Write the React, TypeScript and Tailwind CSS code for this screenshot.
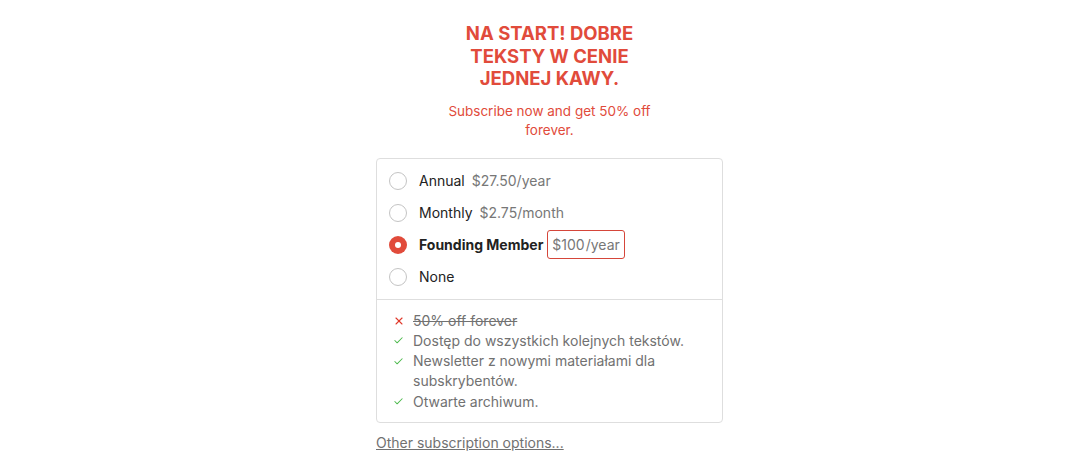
import React, { useState } from 'react';
import { Check, X } from 'lucide-react';

const plans = [
  { id: 'annual', label: 'Annual', price: '$27.50/year' },
  { id: 'monthly', label: 'Monthly', price: '$2.75/month' },
  { id: 'founding', label: 'Founding Member', price: '$100/year' },
  { id: 'none', label: 'None', price: '' },
];

const features = [
  { ok: false, text: '50% off forever' },
  { ok: true, text: 'Dostęp do wszystkich kolejnych tekstów.' },
  { ok: true, text: 'Newsletter z nowymi materiałami dla subskrybentów.' },
  { ok: true, text: 'Otwarte archiwum.' },
];

const App = () => {
  const [selected, setSelected] = useState('founding');

  return (
    <div className="min-h-screen bg-white flex justify-center pl-[12px] font-['Inter','Liberation_Sans',sans-serif]">
      <div className="w-[347px] pt-[22px] flex flex-col items-center">
        <h1 className="max-w-[215px] text-center text-[18.5px] leading-[22.5px] font-bold uppercase text-[#e14b3b]">
          Na start! Dobre teksty w cenie jednej kawy.
        </h1>
        <p className="mt-[12px] max-w-[220px] text-center text-[13.5px] leading-[19px] text-[#e14b3b]">
          Subscribe now and get 50% off forever.
        </p>

        <div className="mt-[18px] w-full border border-[#dedede] rounded-[4px]">
          <div className="py-[6px] px-[12px]">
            {plans.map((p) => {
              const active = selected === p.id;
              return (
                <label
                  key={p.id}
                  className="h-[32px] flex items-center cursor-pointer"
                  onClick={() => setSelected(p.id)}
                >
                  {active ? (
                    <span className="w-[18px] h-[18px] rounded-full bg-[#e14b3b] flex items-center justify-center">
                      <span className="w-[6px] h-[6px] rounded-full bg-white" />
                    </span>
                  ) : (
                    <span className="w-[18px] h-[18px] rounded-full border-[1.5px] border-[#c4c4c4] bg-white" />
                  )}
                  <span
                    className={`ml-[12px] text-[14px] text-[#222] ${active ? 'font-bold' : ''}`}
                  >
                    {p.label}
                  </span>
                  {p.price &&
                    (active ? (
                      <span className="ml-[4px] h-[29px] flex items-center px-[4px] border border-[#d5463a] rounded-[3px] text-[14px] text-[#777]">
                        $100<span className="ml-[1px]">/year</span>
                      </span>
                    ) : (
                      <span className="ml-[7px] text-[14px] text-[#777]">{p.price}</span>
                    ))}
                </label>
              );
            })}
          </div>

          <ul className="border-t border-[#dedede] pt-[11px] pb-[10px] pl-[16px] pr-[12px]">
            {features.map((f, i) => (
              <li key={i} className="flex text-[14px] leading-[20.3px] text-[#717171]">
                <span className="w-[20px] shrink-0 h-[20px] flex items-center">
                  {f.ok ? (
                    <Check size={11} strokeWidth={2.2} className="text-[#4cb94c]" />
                  ) : (
                    <X size={12} strokeWidth={2.2} className="text-[#e0392b]" />
                  )}
                </span>
                <span className={f.ok ? '' : 'line-through'}>{f.text}</span>
              </li>
            ))}
          </ul>
        </div>

        <div className="w-full mt-[7px]">
          <a href="#" className="text-[14px] leading-5 text-[#717171] underline">
            Other subscription options...
          </a>
        </div>
      </div>
    </div>
  );
};

export default App;
